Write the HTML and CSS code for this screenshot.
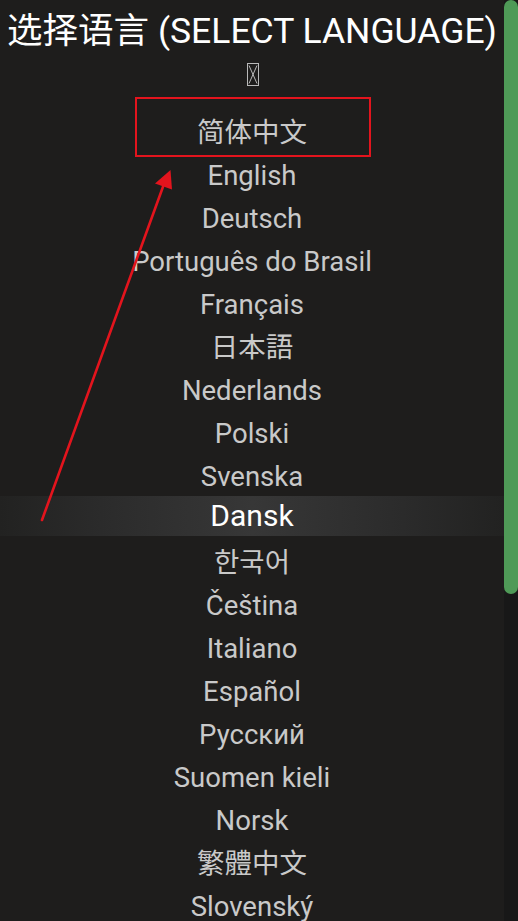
FILE: index.html
```html
<!DOCTYPE html>
<html lang="zh">
<head>
<meta charset="utf-8">
<title>Select language</title>
<link rel="stylesheet" href="styles.css">
</head>
<body>
<div class="screen">
  <main class="content">
    <h1 class="title">选择语言 (SELECT LANGUAGE)</h1>
    <div class="tofu-row">
      <svg class="tofu" width="12" height="23" viewBox="0 0 12 23">
        <rect x="0.5" y="0.5" width="11" height="22" fill="none" stroke="#b9b9b9" stroke-width="1"/>
        <path d="M2 2.5 L10 20.5 M10 2.5 L2 20.5" stroke="#b9b9b9" stroke-width="1" fill="none"/>
      </svg>
    </div>
    <ul class="langs">
      <li class="lang" lang="zh-CN">简体中文</li>
      <li class="lang">English</li>
      <li class="lang">Deutsch</li>
      <li class="lang">Português do Brasil</li>
      <li class="lang">Français</li>
      <li class="lang" lang="ja">日本語</li>
      <li class="lang">Nederlands</li>
      <li class="lang">Polski</li>
      <li class="lang">Svenska</li>
      <li class="lang selected"><span class="band">Dansk</span></li>
      <li class="lang" lang="ko">한국어</li>
      <li class="lang">Čeština</li>
      <li class="lang">Italiano</li>
      <li class="lang">Español</li>
      <li class="lang">Русский</li>
      <li class="lang">Suomen kieli</li>
      <li class="lang">Norsk</li>
      <li class="lang" lang="zh-TW">繁體中文</li>
      <li class="lang">Slovenský</li>
    </ul>
  </main>
  <div class="scrollbar"><div class="thumb"></div></div>
  <svg class="annotation" width="518" height="921" viewBox="0 0 518 921">
    <rect x="136" y="98" width="234" height="58" fill="none" stroke="#e3141d" stroke-width="2"/>
    <line x1="42" y1="520" x2="164" y2="184" stroke="#e3141d" stroke-width="2.6" stroke-linecap="round"/>
    <polygon points="170.5,170 155,183.5 172,189.5" fill="#e3141d"/>
  </svg>
</div>
</body>
</html>
```

FILE: styles.css
```css
html, body {
  margin: 0;
  padding: 0;
  background: #1e1d1c;
  height: 100%;
  overflow: hidden;
}

.screen {
  position: relative;
  display: flex;
  width: 518px;
  height: 921px;
  overflow: hidden;
  font-family: Roboto, "Noto Sans CJK SC", sans-serif;
}

.content {
  flex: 1;
  min-width: 0;
  display: flex;
  flex-direction: column;
  align-items: stretch;
}

.title {
  margin: 0;
  padding-top: 11px;
  font-size: 35.5px;
  font-weight: 400;
  line-height: 40px;
  color: #ffffff;
  text-align: center;
  white-space: nowrap;
}

.tofu-row {
  display: flex;
  justify-content: center;
  margin-top: 12px;
  height: 23px;
}

.tofu {
  display: block;
  margin-left: 2px;
}

.langs {
  list-style: none;
  margin: 25px 0 0 0;
  padding: 0;
}

.lang {
  height: 43px;
  line-height: 43px;
  font-size: 27.5px;
  color: #c9c9c9;
  text-align: center;
  white-space: nowrap;
}

.lang:lang(ja) { font-family: Roboto, "Noto Sans CJK JP", sans-serif; }
.lang:lang(ko) { font-family: Roboto, "Noto Sans CJK KR", sans-serif; }
.lang:lang(zh-TW) { font-family: Roboto, "Noto Sans CJK TC", sans-serif; }

.lang.selected {
  display: flex;
  flex-direction: column;
}

.band {
  display: block;
  height: 40px;
  margin-top: -2px;
  line-height: 39px;
  font-size: 30px;
  color: #ffffff;
  background: linear-gradient(to right, #222221 0%, #2b2b2b 20%, #373737 50%, #2b2b2b 80%, #222221 100%);
}

.scrollbar {
  flex: 0 0 14px;
  height: 921px;
  background: #181818;
}

.thumb {
  height: 594px;
  border-radius: 7px;
  background: #4f9a57;
}

.annotation {
  position: absolute;
  left: 0;
  top: 0;
  pointer-events: none;
}
```
